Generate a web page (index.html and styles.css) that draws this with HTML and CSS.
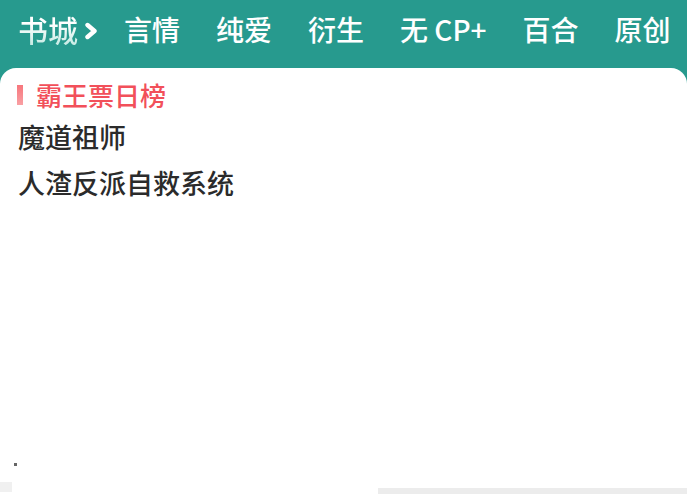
FILE: index.html
```html
<!DOCTYPE html>
<html lang="zh">
<head>
<meta charset="utf-8">
<link rel="stylesheet" href="styles.css">
</head>
<body>
<div class="page">
  <nav class="nav">
    <span class="home">书城</span>
    <svg class="chev" width="14" height="18" viewBox="0 0 14 18"><path d="M3.5 3 L10.5 9 L3.5 15" fill="none" stroke="#fff" stroke-width="4.4" stroke-linecap="round" stroke-linejoin="round"/></svg>
    <div class="tabs">
      <span class="tab">言情</span>
      <span class="tab">纯爱</span>
      <span class="tab">衍生</span>
      <span class="tab">无 CP+</span>
      <span class="tab">百合</span>
      <span class="tab">原创</span>
    </div>
  </nav>
  <main class="card">
    <div class="title-row">
      <span class="bar"></span>
      <span class="title">霸王票日榜</span>
    </div>
    <div class="book">魔道祖师</div>
    <div class="book">人渣反派自救系统</div>
    <div class="spacer"></div>
    <div class="dot-row"><span class="dot"></span></div>
    <div class="bottom-row">
      <span class="stub-left"></span>
      <span class="stub-right"></span>
    </div>
  </main>
</div>
</body>
</html>
```
FILE: styles.css
```css
html, body {
  margin: 0;
  padding: 0;
  height: 500px;
  overflow: hidden;
}
body {
  background: #279a8e;
  font-family: "Noto Sans CJK SC", "Noto Sans", sans-serif;
}
.page {
  display: flex;
  flex-direction: column;
  height: 500px;
}
.nav {
  height: 68px;
  display: flex;
  align-items: center;
  padding-left: 18px;
  padding-bottom: 10px;
  box-sizing: border-box;
  color: #fff;
  font-size: 28px;
  font-weight: 500;
  line-height: 32px;
}
.home {
  font-size: 30px;
  background: linear-gradient(to bottom, #ffffff 35%, #c6ebe4 100%);
  -webkit-background-clip: text;
  background-clip: text;
  color: transparent;
}
.chev {
  margin-left: 6px;
  margin-top: 3px;
  margin-right: 26px;
}
.tabs {
  display: flex;
  gap: 36px;
}
.tab {
  white-space: nowrap;
}
.card {
  flex: 1;
  background: #fff;
  border-radius: 16px 16px 0 0;
  display: flex;
  flex-direction: column;
  padding: 12px 0 0 0;
}
.title-row {
  display: flex;
  align-items: center;
  height: 30px;
  padding-left: 17px;
}
.bar {
  width: 6px;
  height: 20px;
  background: linear-gradient(to bottom, #f7767c, #f9a0a4);
  margin-right: 13px;
}
.title {
  color: #f2505a;
  font-size: 26px;
  font-weight: 500;
  line-height: 30px;
}
.book {
  padding-left: 18px;
  font-size: 27px;
  font-weight: 500;
  line-height: 46px;
  color: #2b2b2b;
}
.title-row + .book {
  margin-top: 4px;
}
.spacer {
  flex: 1;
}
.dot-row {
  padding-left: 14px;
  height: 4px;
  margin-bottom: 15px;
}
.dot {
  display: block;
  width: 3px;
  height: 3px;
  background: #666;
}
.bottom-row {
  display: flex;
  justify-content: space-between;
  align-items: flex-start;
  height: 18px;
}
.stub-left {
  width: 12px;
  height: 10px;
  background: #f0f0f0;
}
.stub-right {
  width: 309px;
  height: 6px;
  margin-top: 6px;
  background: #ececec;
}
```
